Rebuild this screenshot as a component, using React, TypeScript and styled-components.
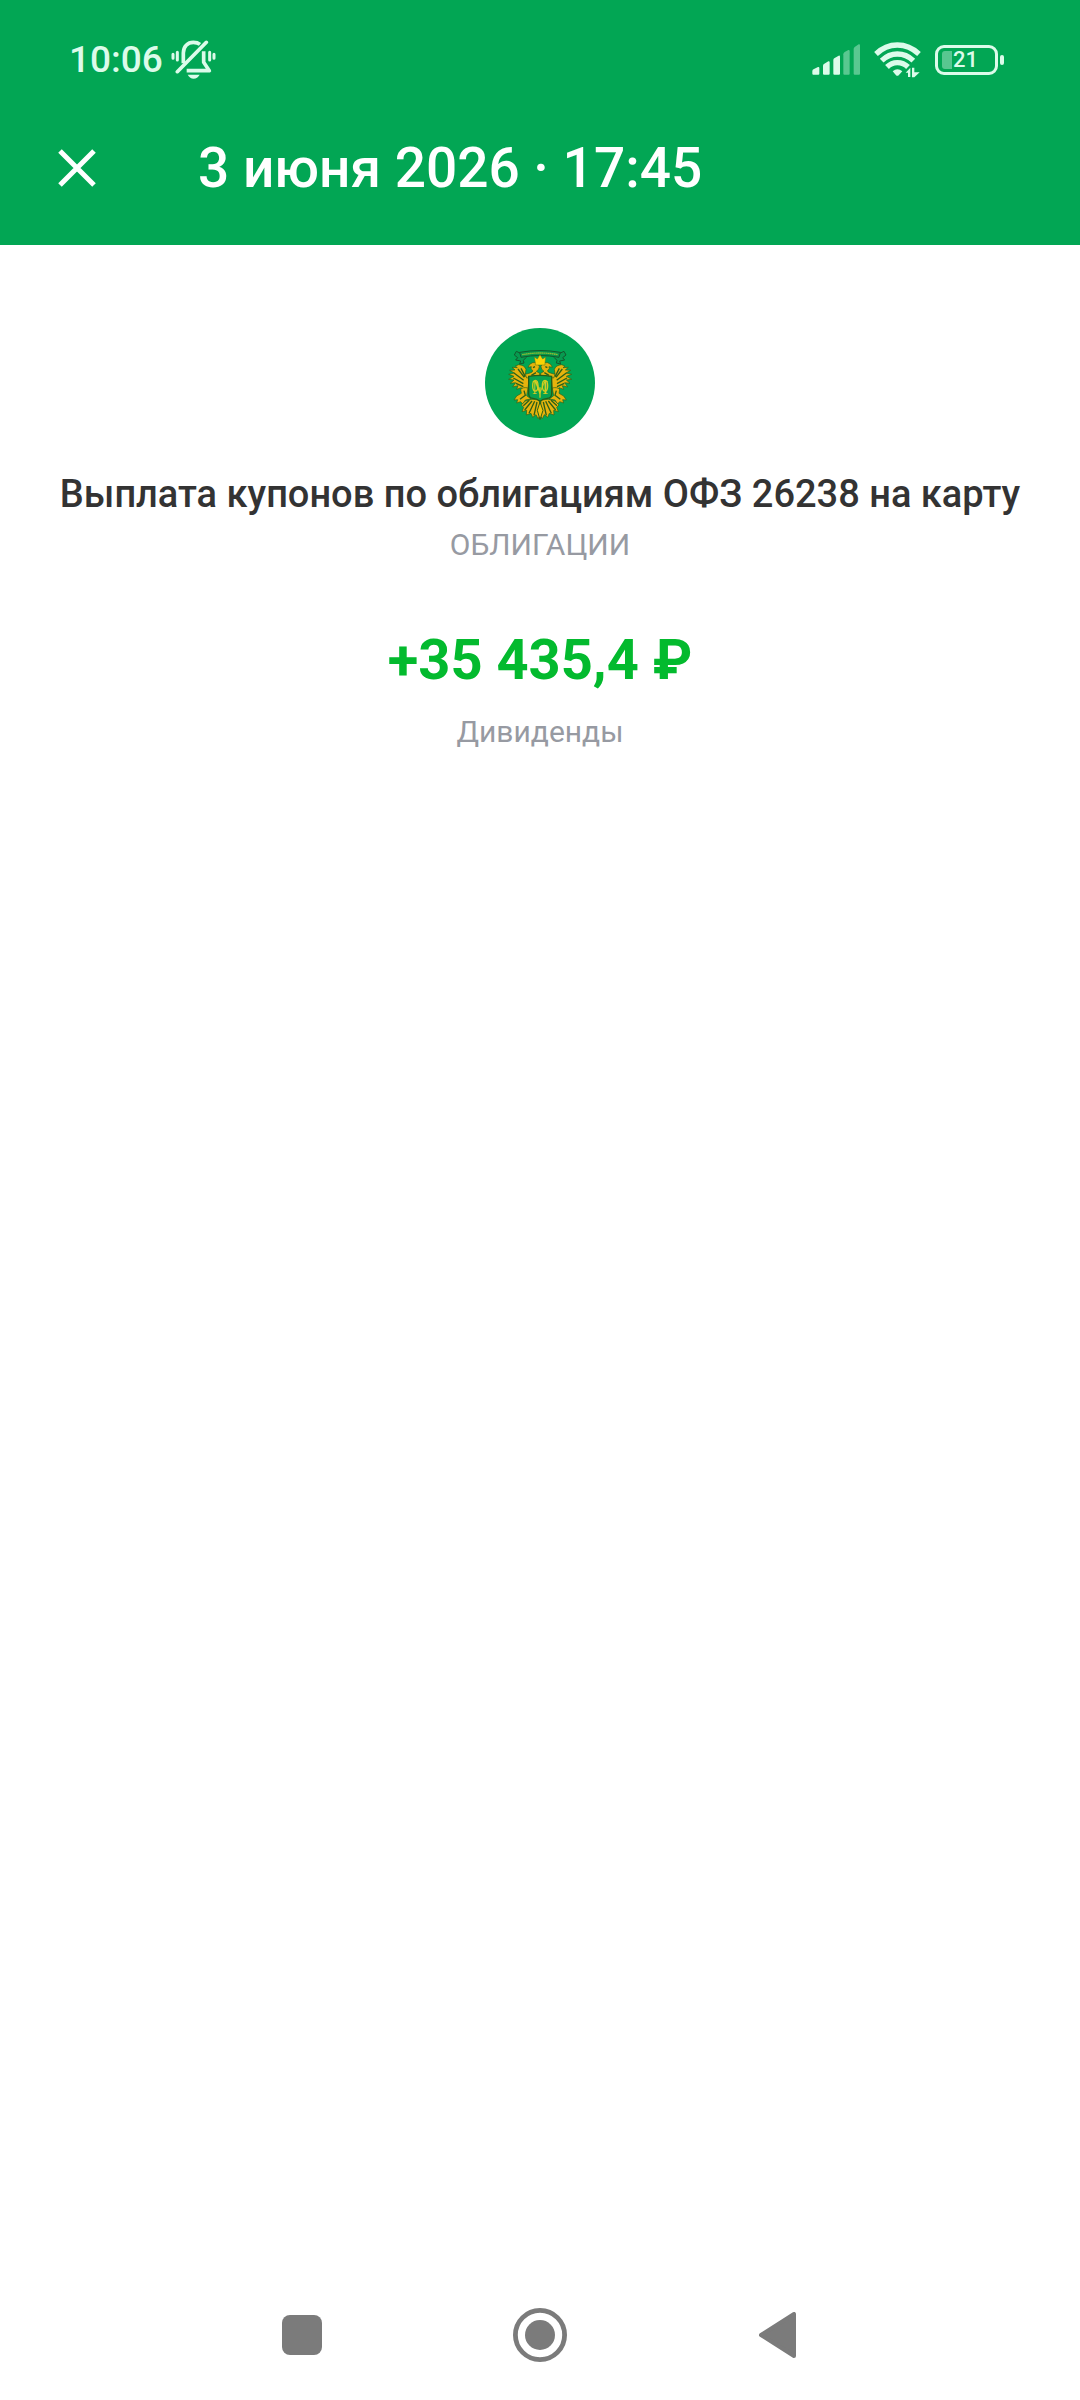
import React from "react";
import styled, { createGlobalStyle } from "styled-components";

const colors = {
  brand: "#02a654",
  income: "#03ba2e",
  text: "#333333",
  muted: "#979aa2",
  status: "#dcfbea",
  nav: "#7b7b7b",
};

const App = () => {
  return (
    <>
      <GlobalStyle />
      <Page>
        <Header>
          <StatusBar>
            <StatusGroup>
              <Time>10:06</Time>
              <MutedBellIcon />
            </StatusGroup>
            <StatusGroup $gap={14}>
              <SignalIcon />
              <WifiIcon />
              <Battery>
                <BatteryBody>
                  <BatteryLevel />
                  21
                </BatteryBody>
                <BatteryTip />
              </Battery>
            </StatusGroup>
          </StatusBar>
          <AppBar>
            <CloseButton type="button" aria-label="Закрыть">
              <svg width="38" height="38" viewBox="0 0 38 38">
                <path
                  d="M2 2L36 36M36 2L2 36"
                  stroke="#fff"
                  strokeWidth="5"
                />
              </svg>
            </CloseButton>
            <Title>3 июня 2026 · 17:45</Title>
          </AppBar>
        </Header>

        <Content>
          <Emblem />
          <Description>Выплата купонов по облигациям ОФЗ 26238 на карту</Description>
          <Category>ОБЛИГАЦИИ</Category>
          <Amount>+35 435,4 ₽</Amount>
          <Kind>Дивиденды</Kind>
        </Content>

        <NavBar>
          <NavButton type="button" aria-label="Недавние">
            <svg width="40" height="40" viewBox="0 0 40 40">
              <rect width="40" height="40" rx="8" fill={colors.nav} />
            </svg>
          </NavButton>
          <NavButton type="button" aria-label="Домой">
            <svg width="54" height="54" viewBox="0 0 54 54">
              <circle
                cx="27"
                cy="27"
                r="24.6"
                fill="none"
                stroke={colors.nav}
                strokeWidth="4.8"
              />
              <circle cx="27" cy="27" r="15" fill={colors.nav} />
            </svg>
          </NavButton>
          <NavButton type="button" aria-label="Назад">
            <svg width="38" height="46" viewBox="0 0 38 46">
              <path
                d="M2 23L35 2V44Z"
                fill={colors.nav}
                stroke={colors.nav}
                strokeWidth="4"
                strokeLinejoin="round"
              />
            </svg>
          </NavButton>
        </NavBar>
      </Page>
    </>
  );
};

const MutedBellIcon = () => (
  <svg width="45" height="39" viewBox="391 61 135 117" fill="none">
    <g stroke={colors.status} strokeWidth="9" strokeLinecap="round">
      <path d="M397 104V116M410 98V121M507 98V121M520 104V116" />
      <path d="M410 156L497 68" strokeWidth="11" />
      <path
        d="M428 131V100C428 80 441 68 458 68C466 68 473 70 478 74"
        strokeWidth="11"
        strokeLinecap="butt"
      />
      <path
        d="M489 95V128L506 153H438"
        strokeWidth="11"
        strokeLinecap="butt"
        strokeLinejoin="round"
      />
    </g>
    <path d="M441 165H477C472 173 467 177 459 177C451 177 446 173 441 165Z" fill={colors.status} />
  </svg>
);

const SignalIcon = () => (
  <svg width="48" height="31" viewBox="69 72 144 93" fill={colors.status}>
    <path d="M70 153Q70 149 75 147L87 141Q91 140 91 144V161Q91 164 88 164H73Q70 164 70 161Z" />
    <path d="M102 137Q102 133 106 131L118 124Q122 123 122 127V161Q122 164 119 164H105Q102 164 102 161Z" />
    <path d="M133 120Q133 116 137 114L149 107Q153 106 153 110V161Q153 164 150 164H136Q133 164 133 161Z" />
    <g opacity="0.4">
      <path d="M163 103Q163 99 167 96L178 90Q182 89 182 93V161Q182 164 179 164H166Q163 164 163 161Z" />
      <path d="M194 87Q194 83 198 80L209 73Q213 72 213 76V161Q213 164 210 164H197Q194 164 194 161Z" />
    </g>
  </svg>
);

const WifiIcon = () => (
  <svg width="47" height="36" viewBox="250 66 141 108" fill="none">
    <g stroke={colors.status} strokeWidth="16">
      <path d="M256 102Q284 75 320 75Q356 75 385 102" />
      <path d="M273 122Q294 102 320 102Q347 102 368 122" />
      <path d="M289 141Q302 128 320 128Q339 128 352 141" />
    </g>
    <path d="M306 154Q320 142 335 154L324 166Q320 169 316 166Z" fill={colors.status} />
    <path d="M345 158L359 143V171H352V158ZM364 143H371V157H387L371 172H364Z" fill={colors.status} />
  </svg>
);

// right half of the eagle, the left one is mirrored
const EagleHalf = () => (
  <>
    <g stroke="#2c6018" strokeWidth="2" fill="#e6b30d">
      <path d="M228 168L240 162L238 148Q243 135 260 134L270 138L264 143L280 142L271 150L287 151L273 159L290 163L274 169L290 178L274 180L285 190L269 188L278 201L262 197L266 208L252 203L250 212L240 206L232 206Z" />
      <path d="M197 168V160L207 154Q197 148 198 139Q203 126 218 128Q229 131 232 142L222 140Q226 147 218 151Q217 157 226 159L240 163L236 174Z" />
      <path d="M232 204Q248 200 254 209L252 220L266 228L274 240L263 239L266 249L254 245L248 252L240 240L223 237L236 227Z" />
      <path d="M198 240Q222 234 240 243L252 255L245 262L250 275L236 271L237 285L223 280L218 292L208 284L202 296L195 286Z" />
    </g>
    <path
      d="M243 172L262 147M245 181L274 159M246 191L276 174M246 200L268 190M240 170L253 145M211 140L217 143M205 246L214 286M212 244L229 280M220 243L242 270M228 241L246 257M244 212L240 226L256 238M208 158L222 166"
      stroke="#2c6018"
      strokeWidth="4"
      fill="none"
    />
    <path
      d="M208 101Q232 95 252 101L267 94L273 105L263 113L269 120L254 123L257 132L244 129L246 121L237 112"
      fill="#079b50"
      stroke="#14572c"
      strokeWidth="3"
      strokeLinejoin="round"
    />
  </>
);

const Emblem = () => (
  <svg width="110" height="110" viewBox="30 24 330 330" role="img" aria-label="Эмблема">
    <circle cx="195" cy="189" r="165" fill={colors.brand} />
    <EagleHalf />
    <g transform="matrix(-1 0 0 1 391 0)">
      <EagleHalf />
    </g>
    {/* ribbon */}
    <path
      d="M134 97Q195 86 256 97L252 112Q195 101 138 112Z"
      fill="#08964b"
      stroke="#14572c"
      strokeWidth="3"
    />
    <path
      d="M142 104Q195 94 249 104"
      fill="none"
      stroke="#a9c52e"
      strokeWidth="4"
      strokeDasharray="4 2"
    />
    {/* crown */}
    <path
      d="M181 128L178 111L187 117L195 104L203 117L212 111L210 128V135H181Z"
      fill="#f9d304"
      stroke="#5c771a"
      strokeWidth="1.5"
    />
    {/* shield */}
    <path
      d="M161 169Q195 163 230 169V222Q229 234 217 235Q204 236 195 244Q186 236 174 235Q162 234 161 222Z"
      fill="#08a24f"
      stroke="#245d18"
      strokeWidth="4"
    />
    <Monogram x="195" y="222" textAnchor="middle">
      М
    </Monogram>
    <g fill="none" stroke="#d3cd20" strokeWidth="4">
      <ellipse cx="181" cy="197" rx="8" ry="16" />
      <ellipse cx="210" cy="197" rx="8" ry="16" />
      <path d="M195 202V233" />
    </g>
    <path d="M195 246L204 271L195 299L187 271Z" fill="#f0c40c" stroke="#2c6018" strokeWidth="3" />
  </svg>
);

const GlobalStyle = createGlobalStyle`
  * {
    box-sizing: border-box;
  }
  body {
    margin: 0;
    background: #fff;
    font-family: Roboto, "Noto Sans", sans-serif;
  }
  h1, h2, p {
    margin: 0;
  }
  svg {
    display: block;
    flex-shrink: 0;
  }
`;

const Page = styled.div`
  display: flex;
  flex-direction: column;
  min-height: 100vh;
`;

const Header = styled.header`
  background: ${colors.brand};
  color: white;
`;

const StatusBar = styled.div`
  display: flex;
  align-items: center;
  justify-content: space-between;
  height: 91px;
  padding: 28px 76px 0 69px;
  color: ${colors.status};
`;

const StatusGroup = styled.div<{ $gap?: number }>`
  display: flex;
  align-items: center;
  gap: ${({ $gap }) => $gap ?? 8}px;
`;

const Time = styled.span`
  font-size: 37px;
  line-height: 40px;
  font-weight: 500;
`;

const Battery = styled.div`
  display: flex;
  align-items: center;
  gap: 2px;
`;

const BatteryBody = styled.div`
  display: flex;
  align-items: center;
  gap: 1px;
  width: 63px;
  height: 30px;
  padding-left: 4px;
  border: 3px solid ${colors.status};
  border-radius: 9px;
  font-size: 22px;
  line-height: 24px;
  font-weight: 500;
`;

const BatteryLevel = styled.div`
  width: 10px;
  height: 18px;
  border-radius: 3px 0 0 3px;
  background: ${colors.status};
  opacity: 0.4;
`;

const BatteryTip = styled.div`
  width: 4px;
  height: 10px;
  border-radius: 2px;
  background: ${colors.status};
`;

const AppBar = styled.div`
  display: flex;
  align-items: center;
  gap: 82px;
  height: 154px;
  padding: 0 38px;
`;

const CloseButton = styled.button`
  display: flex;
  padding: 20px;
  border: none;
  background: none;
  cursor: pointer;
`;

const Title = styled.h1`
  font-size: 55px;
  line-height: 64px;
  font-weight: 500;
`;

const Content = styled.main`
  display: flex;
  flex: 1;
  flex-direction: column;
  align-items: center;
  padding: 83px 32px 32px;
  text-align: center;
`;

const Monogram = styled.text`
  font-family: "Liberation Serif", serif;
  font-size: 54px;
  fill: #d3cd20;
`;

const Description = styled.h2`
  margin-top: 32px;
  color: ${colors.text};
  font-size: 38px;
  line-height: 48px;
  font-weight: 500;
`;

const Caption = styled.p`
  color: ${colors.muted};
  font-size: 30px;
  line-height: 36px;
`;

const Category = styled(Caption)`
  margin-top: 9px;
`;

const Amount = styled.p`
  margin-top: 65px;
  color: ${colors.income};
  font-size: 56px;
  line-height: 64px;
  font-weight: 700;
`;

const Kind = styled(Caption)`
  margin-top: 22px;
`;

const NavBar = styled.nav`
  display: flex;
  justify-content: center;
  height: 130px;
`;

const NavButton = styled.button`
  display: flex;
  align-items: center;
  justify-content: center;
  width: 22%;
  border: none;
  background: none;
  cursor: pointer;
`;

export default App;
